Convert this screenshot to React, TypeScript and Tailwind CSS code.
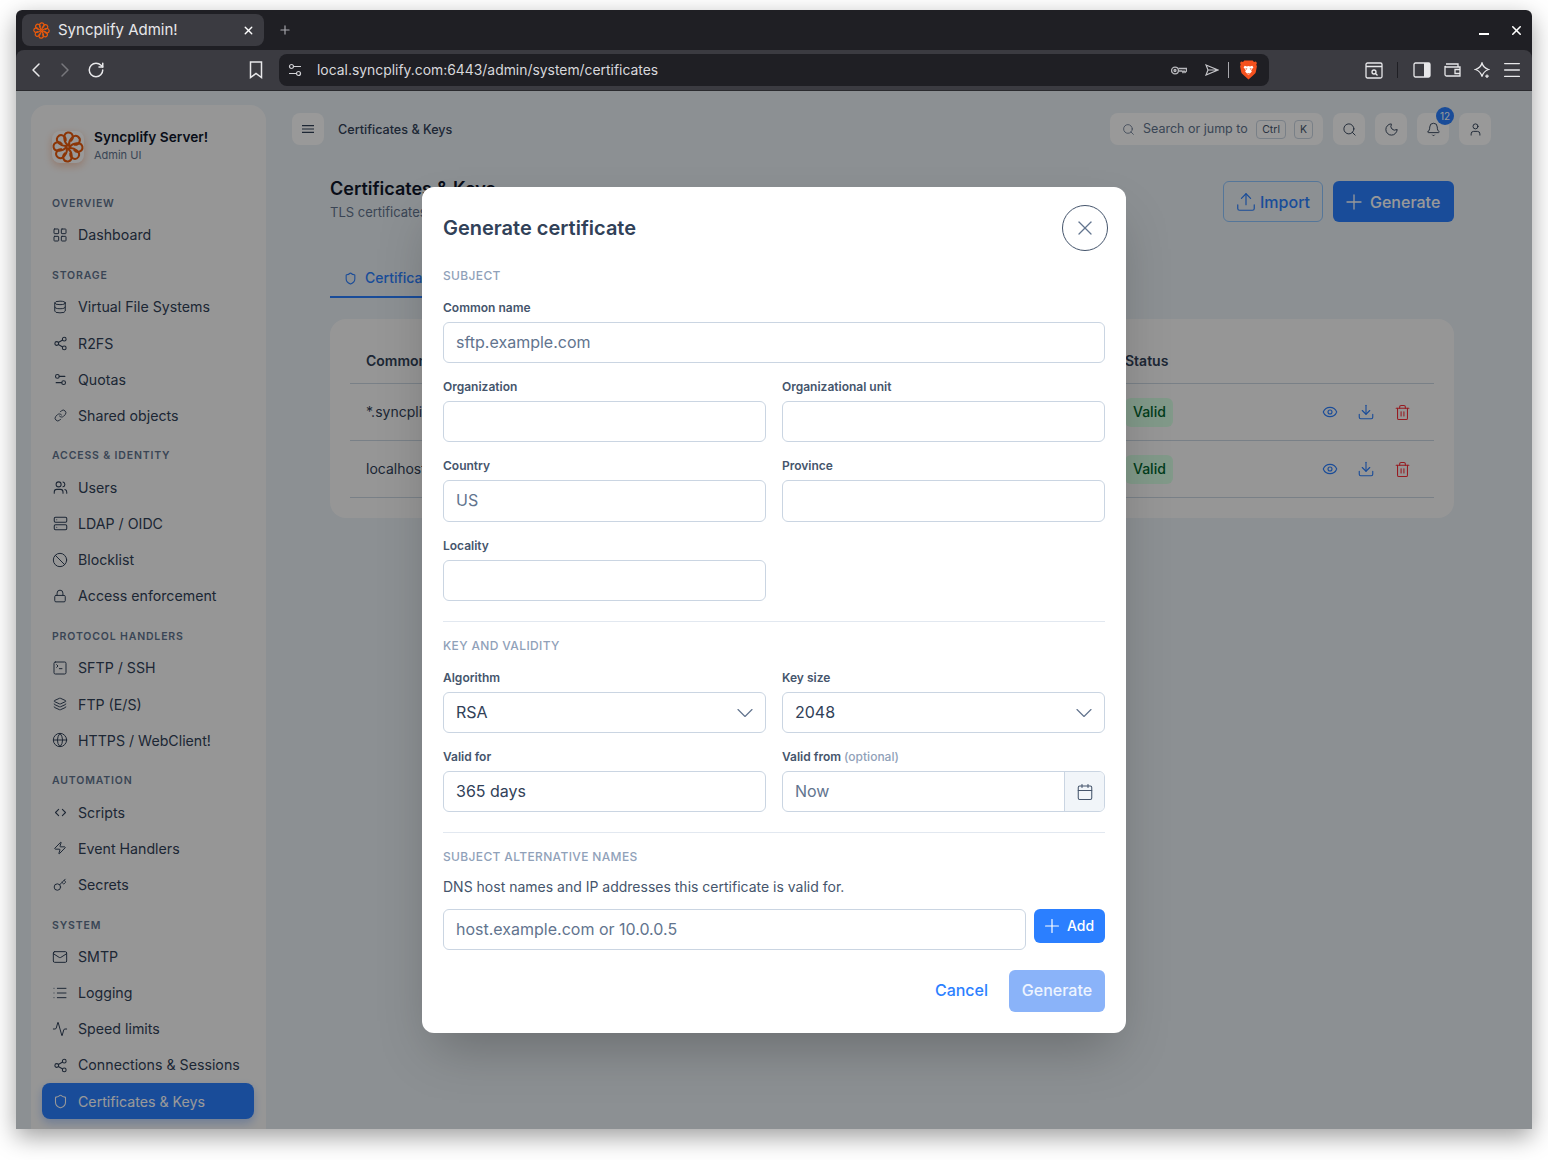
import React from 'react';
import {
    Activity, Ban, Bell, Calendar, ChevronDown, ChevronLeft, ChevronRight, ChevronsLeftRight, Database, Download, Eye, Globe, Key,
    Layers, LayoutGrid, Link, List, Lock, Mail, Menu, Moon, Plus, RotateCw, Search, Server, Settings2, Share2, Shield,
    SquareTerminal, Trash2, Upload, User, Users, X, Zap,
} from 'lucide-react';

const NAV = [
    { title: 'OVERVIEW', items: [{ label: 'Dashboard', icon: LayoutGrid, size: 16 }] },
    {
        title: 'STORAGE',
        items: [
            { label: 'Virtual File Systems', icon: Database, size: 14 },
            { label: 'R2FS', icon: Share2, size: 15 },
            { label: 'Quotas', icon: Settings2, size: 15 },
            { label: 'Shared objects', icon: Link, size: 13 },
        ],
    },
    {
        title: 'ACCESS & IDENTITY',
        items: [
            { label: 'Users', icon: Users, size: 15 },
            { label: 'LDAP / OIDC', icon: Server, size: 15 },
            { label: 'Blocklist', icon: Ban, size: 16 },
            { label: 'Access enforcement', icon: Lock, size: 14 },
        ],
    },
    {
        title: 'PROTOCOL HANDLERS',
        items: [
            { label: 'SFTP / SSH', icon: SquareTerminal, size: 16 },
            { label: 'FTP (E/S)', icon: Layers, size: 14 },
            { label: 'HTTPS / WebClient!', icon: Globe, size: 16 },
        ],
    },
    {
        title: 'AUTOMATION',
        items: [
            { label: 'Scripts', icon: ChevronsLeftRight, size: 15 },
            { label: 'Event Handlers', icon: Zap, size: 14 },
            { label: 'Secrets', icon: Key, size: 14 },
        ],
    },
    {
        title: 'SYSTEM',
        items: [
            { label: 'SMTP', icon: Mail, size: 16 },
            { label: 'Logging', icon: List, size: 16 },
            { label: 'Speed limits', icon: Activity, size: 16 },
            { label: 'Connections & Sessions', icon: Share2, size: 15 },
            { label: 'Certificates & Keys', icon: Shield, size: 15, active: true },
        ],
    },
];

const Flower: React.FC<{ size: number; stroke?: number }> = ({ size, stroke = 1.6 }) => (
    <svg width={size} height={size} viewBox="0 0 24 24" fill="none" stroke="#ea5a0c" strokeWidth={stroke} strokeLinecap="round">
        {[0, 45, 90, 135, 180, 225, 270, 315].map((deg) => (
            <path key={deg} d="M12 10.800C8.800 8.500 7.800 2 11.800 1.200C15.600.7 16.800 5.200 14.300 7.300" transform={`rotate(${deg} 12 12)`} />
        ))}
    </svg>
);

const Brave = () => (
    <svg width="17" height="20" viewBox="0 0 16 19">
        <path d="M4 .5h8l1.200 1.300 1.800-.4 1 1.500-.6 1.500.6 1.600-1 5.200c-.3 1.300-.9 2-2 2.800L8 18.500 3 14c-1.100-.8-1.700-1.500-2-2.800L0 6l.6-1.600L0 2.900l1-1.500 1.800.4z" fill="#f4511e" />
        <path d="M4.500 5.500l2 .7L8 5.700l1.500.5 2-.7 1.200 1.300-2.200 3 .7 1.200L8 14.500 4.800 11l.7-1.200-2.200-3z" fill="#fff" />
        <path d="M5 7.500l2 .8-1 1zM11 7.500l-2 .8 1 1zM6.500 12.500h3L8 14z" fill="#f4511e" />
    </svg>
);

const Label: React.FC<{ text: string; hint?: string }> = ({ text, hint }) => (
    <div className="text-xs leading-4 font-semibold text-slate-600 mb-[6px]">
        {text} {hint && <span className="font-medium text-slate-400">{hint}</span>}
    </div>
);

const Input: React.FC<{ placeholder?: string; h?: string }> = ({ placeholder, h = 'h-[41px]' }) => (
    <input
        readOnly
        placeholder={placeholder}
        className={`w-full ${h} px-3 pb-[2px] border border-slate-300 rounded-md bg-white text-base text-slate-700 placeholder:text-slate-500 outline-none`}
    />
);

const SelectBox: React.FC<{ value: string }> = ({ value }) => (
    <div className="h-[41px] pl-3 pr-[6px] flex items-center justify-between border border-slate-300 rounded-md text-base text-slate-700">
        <span className="-mt-[2px]">{value}</span>
        <ChevronDown size={28} strokeWidth={1} className="text-slate-500" />
    </div>
);

const SectionTitle: React.FC<{ children: React.ReactNode }> = ({ children }) => (
    <div className="text-xs leading-4 font-medium tracking-[0.03em] text-slate-400">{children}</div>
);

const IconBtn: React.FC<{ children: React.ReactNode }> = ({ children }) => (
    <button className="relative w-8 h-8 rounded-lg bg-white flex items-center justify-center text-slate-700">{children}</button>
);

const CertRow: React.FC<{ name: string }> = ({ name }) => (
    <div className="h-[57px] flex items-center pl-[16px] border-b border-slate-300 text-sm text-slate-700">
        <div className="w-[759px]">{name}</div>
        <div className="h-[29px] w-[48px] pl-2 flex items-center rounded-md bg-[#d8ffe4] text-green-800 font-medium">Valid</div>
        <div className="ml-auto flex items-center pr-[14px]">
            <div className="w-9 flex justify-center"><Eye size={16} strokeWidth={1.7} className="text-blue-500" /></div>
            <div className="w-9 flex justify-center"><Download size={18} strokeWidth={1.5} className="text-blue-500" /></div>
            <div className="w-9 flex justify-center"><Trash2 size={17} strokeWidth={1.5} className="text-red-500" /></div>
        </div>
    </div>
);

const Modal = () => (
    <div className="w-[704px] h-[846px] bg-white rounded-xl shadow-2xl px-[21px] pt-[18px]">
        <div className="flex items-center justify-between h-[46px] -mr-[3px]">
            <h2 className="text-xl font-semibold text-slate-700">Generate certificate</h2>
            <button className="w-[46px] h-[46px] rounded-full border border-slate-600 flex items-center justify-center text-slate-500">
                <X size={24} strokeWidth={1.3} />
            </button>
        </div>

        <div className="mt-[17px]"><SectionTitle>SUBJECT</SectionTitle></div>
        <div className="mt-[16px]">
            <Label text="Common name" />
            <Input placeholder="sftp.example.com" />
        </div>
        <div className="mt-[16px] grid grid-cols-2 gap-x-4">
            <div>
                <Label text="Organization" />
                <Input />
            </div>
            <div>
                <Label text="Organizational unit" />
                <Input />
            </div>
        </div>
        <div className="mt-[16px] grid grid-cols-2 gap-x-4">
            <div>
                <Label text="Country" />
                <Input placeholder="US" h="h-[42px]" />
            </div>
            <div>
                <Label text="Province" />
                <Input h="h-[42px]" />
            </div>
        </div>
        <div className="mt-[16px] grid grid-cols-2 gap-x-4">
            <div>
                <Label text="Locality" />
                <Input />
            </div>
        </div>

        <div className="mt-[20px] border-t border-slate-200" />
        <div className="mt-[16px]"><SectionTitle>KEY AND VALIDITY</SectionTitle></div>
        <div className="mt-[16px] grid grid-cols-2 gap-x-4">
            <div>
                <Label text="Algorithm" />
                <SelectBox value="RSA" />
            </div>
            <div>
                <Label text="Key size" />
                <SelectBox value="2048" />
            </div>
        </div>
        <div className="mt-[16px] grid grid-cols-2 gap-x-4">
            <div>
                <Label text="Valid for" />
                <div className="h-[41px] px-3 pb-[2px] flex items-center border border-slate-300 rounded-md text-base text-slate-700">365 days</div>
            </div>
            <div>
                <Label text="Valid from" hint="(optional)" />
                <div className="h-[41px] flex border border-slate-300 rounded-md overflow-hidden">
                    <div className="flex-1 pl-3 pb-[2px] flex items-center text-base text-slate-500">Now</div>
                    <div className="w-10 border-l border-slate-300 bg-slate-100 flex items-center justify-center text-slate-600">
                        <Calendar size={18} strokeWidth={1.4} />
                    </div>
                </div>
            </div>
        </div>

        <div className="mt-[20px] border-t border-slate-200" />
        <div className="mt-[16px]"><SectionTitle>SUBJECT ALTERNATIVE NAMES</SectionTitle></div>
        <p className="mt-[12px] text-sm leading-5 text-slate-600">DNS host names and IP addresses this certificate is valid for.</p>
        <div className="mt-[12px] flex items-start gap-2">
            <div className="flex-1"><Input placeholder="host.example.com or 10.0.0.5" /></div>
            <button className="h-[34px] w-[71px] pl-[7px] rounded-md bg-blue-500 text-white text-sm font-medium flex items-center gap-1">
                <Plus size={22} strokeWidth={1.3} />
                Add
            </button>
        </div>
        <div className="mt-[20px] flex items-center justify-end">
            <button className="pb-[2px] text-base font-medium text-blue-500">Cancel</button>
            <button className="ml-[21px] h-[42px] w-[96px] pb-[2px] rounded-md bg-[#8ab3f9] text-white/85 text-base font-medium">Generate</button>
        </div>
    </div>
);

export default function App() {
    return (
        <div className="w-[1548px] h-[1160px] bg-white pt-[10px] pl-4 font-['Inter',sans-serif]">
            <div className="w-[1516px] h-[1119px] rounded-t-md overflow-hidden shadow-[0_8px_24px_rgba(0,0,0,0.38)] flex flex-col">
                {/* tab strip */}
                <div className="h-10 shrink-0 bg-[#1f1f24] flex items-center pl-[6px] pr-[8px] text-white">
                    <div className="w-[242px] h-8 rounded-lg bg-[#3b3b41] flex items-center pl-[11px] pr-[9px]">
                        <Flower size={17} stroke={1.7} />
                        <span className="ml-2 text-[15px] text-[#e8e8ea]">Syncplify Admin!</span>
                        <X size={13} strokeWidth={2.5} className="ml-auto" />
                    </div>
                    <Plus size={14} className="ml-[14px] text-[#a8a8ad]" />
                    <div className="ml-auto w-[10px] h-[2px] mt-2 bg-white mr-[20px]" />
                    <X size={15} strokeWidth={2.5} />
                </div>

                {/* toolbar */}
                <div className="h-[41px] shrink-0 bg-[#1f1f24]">
                    <div className="h-full bg-[#3b3b41] rounded-t-lg border-b border-[#2a2a2e] flex items-center text-[#e8e8ea]">
                        <ChevronLeft size={24} strokeWidth={1.5} className="ml-2" />
                        <ChevronRight size={24} strokeWidth={1.5} className="ml-[5px] text-[#77777c]" />
                        <RotateCw size={18} className="ml-[10px]" />
                        <svg width="14" height="18" viewBox="0 0 14 18" fill="none" stroke="currentColor" strokeWidth="1.500" className="ml-[144px]">
                            <path d="M1.500 1h11v15.500L7 12.500l-5.500 4z" />
                        </svg>
                        <div className="ml-[16px] w-[990px] h-8 rounded-lg bg-[#1f1f24] flex items-center pl-[9px] pr-[12px]">
                            <svg width="14" height="14" viewBox="0 0 14 14" fill="none" stroke="#d0d0d4" strokeWidth="1.200">
                                <circle cx="3.500" cy="3.500" r="2" />
                                <circle cx="10.500" cy="10.500" r="2" />
                                <path d="M6 3.500h7M1 10.500h7" />
                            </svg>
                            <span className="ml-[15px] text-[13.9px] text-[#d8d8dc]">local.syncplify.com:6443/admin/system/certificates</span>
                            <svg width="16" height="11" viewBox="0 0 16 11" fill="none" stroke="#b8b8bc" strokeWidth="1.300" className="ml-auto">
                                <circle cx="4" cy="5.500" r="3.400" />
                                <circle cx="4" cy="5.500" r="1" />
                                <path d="M7.500 3.500h8v2.500l-1.500 1.500-1-1.500-1 1.500-1-1.500H7.500" />
                            </svg>
                            <svg width="14" height="12" viewBox="0 0 14 12" fill="none" stroke="#c4c4c8" strokeWidth="1.200" className="ml-[18px]">
                                <path d="M1 1l12 5-12 5 2-5zM3 6h10" />
                            </svg>
                            <div className="ml-[9px] w-px h-4 bg-[#a8a8ad]" />
                            <div className="ml-[11px]"><Brave /></div>
                        </div>
                        <svg width="18" height="17" viewBox="0 0 18 17" fill="none" stroke="#e8e8ea" strokeWidth="1.300" className="ml-[96px]">
                            <rect x="1" y="1" width="16" height="15" rx="1.500" />
                            <path d="M1 4.500h16" />
                            <circle cx="9" cy="10" r="2" />
                            <path d="M10.500 11.500l2 2" />
                        </svg>
                        <div className="ml-[14px] w-px h-4 bg-[#1f1f24]" />
                        <svg width="18" height="16" viewBox="0 0 18 16" className="ml-[15px]">
                            <rect x="1" y="1" width="16" height="14" rx="1.500" fill="none" stroke="#e8e8ea" strokeWidth="1.300" />
                            <rect x="11" y="1" width="6" height="14" fill="#e8e8ea" />
                        </svg>
                        <svg width="17" height="14" viewBox="0 0 17 14" fill="none" stroke="#e8e8ea" strokeWidth="1.300" className="ml-[13px]">
                            <path d="M2 1h12v3M1 3v8.500A1.500 1.500 0 0 0 2.500 13H16V4H3A2 1.500 0 0 1 1 3zM16 6.500h-5v4h5" />
                        </svg>
                        <svg width="16" height="17" viewBox="0 0 16 17" fill="none" stroke="#e8e8ea" strokeWidth="1.300" className="ml-[13px]">
                            <path d="M8 1c1 3.500 2.500 5 6.500 6.500-4 1.500-5.500 3-6.500 7-1-4-2.500-5.500-6.500-7C5.500 6 7 4.500 8 1z" />
                            <path d="M13 12.500v3.500M11.200 14.200h3.600" />
                        </svg>
                        <Menu size={22} strokeWidth={1.5} className="ml-[11px] mr-[9px]" />
                    </div>
                </div>

                {/* page */}
                <div className="relative flex-1 overflow-hidden bg-[#eaf0f5] flex">
                    <aside className="ml-[15px] mt-[14px] w-[235px] h-[1060px] shrink-0 rounded-2xl bg-[#fbfbfb]">
                        <div className="h-[84px] pl-[21px] flex items-center gap-[10px]">
                            <div className="w-8 h-8 rounded-lg bg-white shadow-[0_3px_8px_rgba(234,90,12,0.3)] flex items-center justify-center shrink-0">
                                <Flower size={34} stroke={1.5} />
                            </div>
                            <div className="-mt-[5px]">
                                <div className="text-[13.7px] leading-5 font-semibold text-slate-900">Syncplify Server!</div>
                                <div className="text-[11px] leading-4 text-slate-500">Admin UI</div>
                            </div>
                        </div>
                        <nav className="pl-[11px] pr-[12px] pt-[6px]">
                            {NAV.map((group, i) => (
                                <div key={group.title} className={i > 0 ? 'mt-[13.9px]' : ''}>
                                    <div className="pl-[10px] h-4 mb-[6px] text-[10.5px] leading-[18px] font-semibold tracking-[0.08em] text-slate-500">{group.title}</div>
                                    {group.items.map((item) => (
                                        <div
                                            key={item.label}
                                            className={`h-[36.15px] pl-[10px] flex items-center gap-[10px] rounded-lg text-[14.2px] ${
                                                item.active ? 'bg-blue-500 text-white shadow-[0_4px_10px_rgba(59,130,246,0.35)]' : 'text-slate-700'
                                            }`}
                                        >
                                            <span className="w-4 flex justify-center">
                                                <item.icon size={item.size} strokeWidth={item.size < 16 ? 1.7 : 1.5} />
                                            </span>
                                            <span>{item.label}</span>
                                        </div>
                                    ))}
                                </div>
                            ))}
                        </nav>
                    </aside>

                    <main className="flex-1 min-w-0 pl-[26px] pr-[41px] pt-[22px]">
                        <div className="flex items-center h-8">
                            <IconBtn>
                                <svg width="12" height="8" viewBox="0 0 12 8" stroke="currentColor" strokeWidth="1.200">
                                    <path d="M0 .6h12M0 4h12M0 7.400h12" />
                                </svg>
                            </IconBtn>
                            <span className="ml-[14px] pt-[2px] text-[12.6px] font-medium text-slate-700">Certificates & Keys</span>
                            <div className="ml-auto w-[213px] h-8 rounded-lg bg-white flex items-center pl-3 pr-[10px] text-slate-500">
                                <Search size={13} strokeWidth={1.5} />
                                <span className="ml-2 text-[12.5px]">Search or jump to</span>
                                <span className="ml-auto h-[19px] px-[5px] border border-slate-300 rounded text-[10.5px] leading-[17px] text-slate-600">Ctrl</span>
                                <span className="ml-2 h-[19px] px-[5px] border border-slate-300 rounded text-[10.5px] leading-[17px] text-slate-600">K</span>
                            </div>
                            <div className="ml-[10px] flex gap-[10px]">
                                <IconBtn><Search size={15} strokeWidth={1.5} /></IconBtn>
                                <IconBtn><Moon size={15} strokeWidth={1.5} /></IconBtn>
                                <IconBtn>
                                    <Bell size={15} strokeWidth={1.5} />
                                    <span className="absolute -top-[6px] -right-[5px] w-[18px] h-[18px] rounded-full bg-blue-500 text-white text-[10px] flex items-center justify-center">12</span>
                                </IconBtn>
                                <IconBtn><User size={15} strokeWidth={1.5} /></IconBtn>
                            </div>
                        </div>

                        <div className="ml-[38px] mr-[37px]">
                            <div className="flex items-start mt-[29px]">
                                <div>
                                    <h1 className="mt-[1px] text-lg leading-[27px] font-semibold text-slate-900">Certificates & Keys</h1>
                                    <p className="text-[13px] leading-5 text-slate-500">TLS certificates and private keys</p>
                                </div>
                                <button className="ml-auto mt-[7px] w-[100px] h-[41px] pl-[11px] rounded-md border border-blue-300 text-blue-500 font-medium flex items-center gap-[3px]">
                                    <Upload size={22} strokeWidth={1.3} />
                                    Import
                                </button>
                                <button className="ml-[10px] mt-[7px] w-[121px] h-[41px] pl-[9px] rounded-md bg-blue-500 text-white font-medium flex items-center gap-1">
                                    <Plus size={24} strokeWidth={1.3} />
                                    Generate
                                </button>
                            </div>

                            <div className="mt-[36px] h-10 w-[180px] border-b-2 border-blue-500 pl-[14px] pt-[2px] flex items-center gap-2 text-sm font-medium text-blue-500">
                                <Shield size={13} />
                                Certificates
                            </div>

                            <div className="mt-[21px] h-[199px] rounded-2xl bg-[#fbfbfb] px-5 pt-5">
                                <div className="h-[45px] pb-[1px] flex items-center pl-[16px] border-b border-slate-300 text-sm font-semibold text-slate-700">
                                    <div className="w-[759px]">Common name</div>
                                    <div>Status</div>
                                </div>
                                <CertRow name="*.syncplify.me" />
                                <CertRow name="localhost" />
                            </div>
                        </div>
                    </main>

                    <div className="absolute inset-0 bg-black/40 flex items-center justify-center">
                        <Modal />
                    </div>
                </div>
            </div>
        </div>
    );
}
